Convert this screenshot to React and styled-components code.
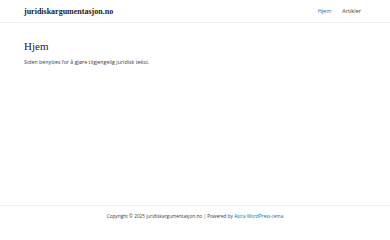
import React from "react";
import styled, { createGlobalStyle } from "styled-components";

const Global = createGlobalStyle`
  html, body { margin: 0; padding: 0; background: #fff; }
  body { font-family: "Open Sans", sans-serif; color: #3a3a3a; }
`;

const Page = styled.div`
  display: flex;
  flex-direction: column;
  min-height: 240px;
`;

const Header = styled.header`
  display: flex;
  align-items: center;
  justify-content: space-between;
  height: 22px;
  padding: 0 24px;
  border-bottom: 1px solid #f2f2f2;
`;

const Logo = styled.div`
  font-family: "Liberation Serif", serif;
  font-weight: 700;
  font-size: 8px;
  color: #222;
`;

const Nav = styled.nav`
  display: flex;
  gap: 11px;
  padding-right: 5px;
`;

const NavLink = styled.a`
  font-size: 5.5px;
  color: ${(p) => (p.active ? "#0274be" : "#3a3a3a")};
`;

const Main = styled.main`
  flex: 1;
  padding: 17px 24px 16px;
`;

const Title = styled.h1`
  margin: 0 0 6px;
  font-family: "Liberation Serif", serif;
  font-weight: 400;
  font-size: 11px;
  color: #222;
`;

const Text = styled.p`
  margin: 0;
  font-size: 5.3px;
`;

const Footer = styled.footer`
  display: flex;
  justify-content: center;
  align-items: center;
  height: 20px;
  margin-bottom: 14px;
  border-top: 1px solid #eee;
  font-size: 4.7px;
  color: #3a3a3a;
`;

const FootLink = styled.a`
  color: #0274be;
`;

export default function App() {
  return (
    <Page>
      <Global />
      <Header>
        <Logo>juridiskargumentasjon.no</Logo>
        <Nav>
          <NavLink active>Hjem</NavLink>
          <NavLink>Artikler</NavLink>
        </Nav>
      </Header>
      <Main>
        <Title>Hjem</Title>
        <Text>Siden benyttes for å gjøre tilgjengelig juridisk tekst.</Text>
      </Main>
      <Footer>
        <span>
          Copyright © 2025 juridiskargumentasjon.no | Powered by{" "}
          <FootLink>Astra WordPress-tema</FootLink>
        </span>
      </Footer>
    </Page>
  );
}
